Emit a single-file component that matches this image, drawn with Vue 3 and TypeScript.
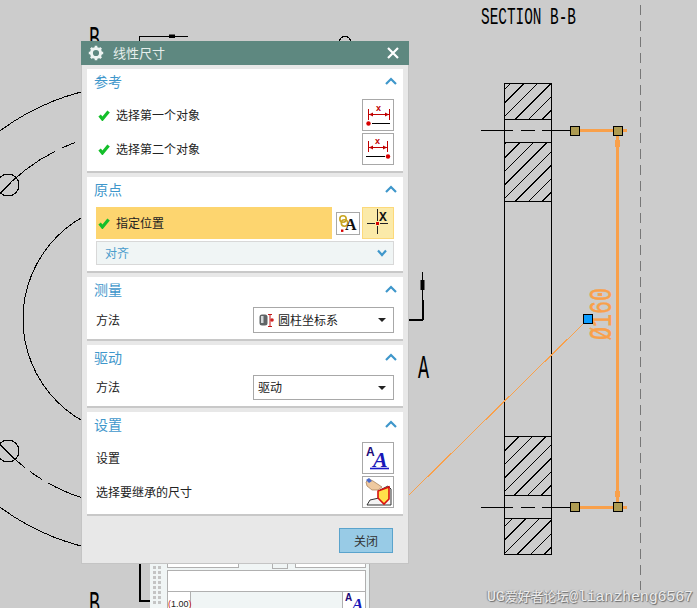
<script setup lang="ts">
interface Seg { x1: number; y1: number; x2: number; y2: number }

const hatchRects: [number, number, number, number, number][] = [
  [504, 84, 551, 119, 6],
  [504, 142, 551, 201, 3],
  [504, 436, 551, 495.5, 2],
  [504, 518, 551, 554, 9],
]

function hatch(x0: number, y0: number, x1: number, y1: number, off: number): Seg[] {
  const out: Seg[] = []
  const step = 13.5
  for (let c = x0 + y0 + off; c < x1 + y1; c += step) {
    const ax = Math.max(x0, c - y1)
    const bx = Math.min(x1, c - y0)
    if (bx > ax) out.push({ x1: ax, y1: c - ax, x2: bx, y2: c - bx })
  }
  return out
}

const hatchLines: Seg[] = hatchRects.flatMap((r) => hatch(r[0], r[1], r[2], r[3], r[4]))
const partRules: number[] = [83.5, 119.5, 142.5, 201.5, 436.5, 495.5, 518.5, 554.5]
const axisRows: number[] = [130.5, 507.5]
const handles: [number, number][] = [[570, 126], [613, 126], [570, 502], [613, 502]]
const gripDots: number[] = Array.from({ length: 16 }, (_, i) => i)
</script>

<template>
  <div class="page">
    <svg class="drawing" width="697" height="608" viewBox="0 0 697 608">
      <g class="crisp" fill="none" stroke="#000" stroke-width="1">
        <circle cx="140" cy="319" r="234.5" />
        <circle cx="140" cy="319" r="117" />
        <path d="M0 193.5 A188 188 0 0 1 55 151.3 M62 148 A188 188 0 0 1 75 142.6" />
        <path d="M0 444.5 A188 188 0 0 0 25 467.7 M30 471.5 A188 188 0 0 0 42 479.4 M48 483 A188 188 0 0 0 81 497.5" />
        <circle cx="8" cy="185" r="11" />
        <circle cx="8" cy="451" r="11" />
        <path d="M139.5 41 V36.5 H188" />
        <path d="M339 41 Q345 31 351 41" />
        <path d="M422.5 272 V319 H409" />
        <path d="M422.5 300 V320 M409 319.5 H423" stroke-width="2" />
        <path d="M140 564 V601 H150" stroke-width="2" />
        <path d="M504.5 84 V554 M551.5 84 V554" />
        <line v-for="y in partRules" :key="y" x1="504" x2="552" :y1="y" :y2="y" />
        <line v-for="(s, i) in hatchLines" :key="i" :x1="s.x1" :y1="s.y1" :x2="s.x2" :y2="s.y2" />
        <g v-for="y in axisRows" :key="y">
          <path :d="`M481 ${y} H513 M521 ${y} H535 M542 ${y} H571`" />
        </g>
      </g>
      <path d="M169 34.5 H175 V38 H169 Z M420.5 280 H424.5 V290 H420.5 Z" fill="#000" />
      <line class="crisp" x1="640.5" y1="5" x2="640.5" y2="590" stroke="#777" stroke-width="1" stroke-dasharray="10 6" />

      <text class="cad" x="481" y="24" textLength="95" lengthAdjust="spacingAndGlyphs">SECTION B-B</text>
      <text class="cad cad-big" x="89" y="49" textLength="11" lengthAdjust="spacingAndGlyphs">B</text>
      <text class="cad cad-big" x="89" y="614" textLength="11" lengthAdjust="spacingAndGlyphs">B</text>
      <text class="cad cad-big" x="418" y="378" textLength="11" lengthAdjust="spacingAndGlyphs">A</text>

      <g class="crisp" stroke="#f9a04a" fill="none">
        <path d="M580 130.5 H627 M580 507.5 H627" stroke-width="3" />
        <path d="M617.5 135 V502" stroke-width="3" />
        <path d="M617.5 140 V147 M617.5 491 V497" stroke-width="5" />
        <path d="M584 323 L409 495" stroke-width="1" />
      </g>
      <text class="dim" transform="translate(611 340) rotate(-90)" textLength="52" lengthAdjust="spacingAndGlyphs">Ø160</text>
      <rect v-for="(h, i) in handles" :key="i" :x="h[0] + 0.5" :y="h[1] + 0.5" width="9" height="9" fill="#ad9b52" stroke="#000" />
      <rect x="583.5" y="314.5" width="9" height="9" fill="#0a9cff" stroke="#000" />
    </svg>

    <div class="mark">UG<span class="mark-cjk">爱好者论坛</span>@lianzheng6567</div>

    <div class="under">
      <div class="grip">
        <i v-for="d in gripDots" :key="d"></i>
      </div>
      <div class="under-main">
        <div class="under-top">
          <span class="ut ut-a"></span>
          <span class="ut ut-b"></span>
          <span class="ut ut-c"></span>
        </div>
        <div class="under-box"></div>
        <div class="under-foot">
          <span class="scale"><b>(</b>1.00<b>)</b></span>
          <span class="mini-a">
            <svg width="22" height="16" viewBox="0 0 22 16">
              <text x="2" y="9" class="ia-tiny">A</text>
              <text x="9" y="18" class="ia-mid">A</text>
            </svg>
          </span>
        </div>
      </div>
    </div>

    <section class="dialog">
      <header class="title">
        <svg class="gear" width="16" height="16" viewBox="0 0 16 16">
          <circle cx="8" cy="8" r="4.6" fill="none" stroke="#eef4f2" stroke-width="3" />
          <path d="M8 0.8 V3 M8 13 V15.2 M0.8 8 H3 M13 8 H15.2 M2.9 2.9 L4.5 4.5 M11.5 11.5 L13.1 13.1 M13.1 2.9 L11.5 4.5 M4.5 11.5 L2.9 13.1" stroke="#eef4f2" stroke-width="2.6" />
        </svg>
        <span class="title-text">线性尺寸</span>
        <svg class="close-x" width="12" height="12" viewBox="0 0 12 12">
          <path d="M1 1 L11 11 M11 1 L1 11" stroke="#fff" stroke-width="2.2" />
        </svg>
      </header>

      <div class="body">
        <div class="group">
          <div class="head">
            <span>参考</span>
            <svg class="chev" width="12" height="8" viewBox="0 0 12 8"><path d="M1 7 L6 2 L11 7" /></svg>
          </div>
          <div class="row">
            <svg class="check" width="12" height="11" viewBox="0 0 12 11"><path d="M1.6 5.6 L4.4 9 L10.6 1.4" /></svg>
            <span class="label">选择第一个对象</span>
            <button class="icon-btn">
              <svg width="30" height="30" viewBox="0 0 30 30">
                <g stroke="#c00000" fill="none"><path d="M5.5 9 V20 M26.5 9 V20 M6 14.5 H26" /></g>
                <path d="M6 14.5 L10 12.5 V16.5 Z M26 14.5 L22 12.5 V16.5 Z" fill="#c00000" />
                <text x="13" y="11" class="ix">x</text>
                <path d="M9 23.5 H27" stroke="#000" />
                <circle cx="5.5" cy="23.5" r="2.2" fill="#d80000" />
              </svg>
            </button>
          </div>
          <div class="row">
            <svg class="check" width="12" height="11" viewBox="0 0 12 11"><path d="M1.6 5.6 L4.4 9 L10.6 1.4" /></svg>
            <span class="label">选择第二个对象</span>
            <button class="icon-btn">
              <svg width="30" height="30" viewBox="0 0 30 30">
                <g stroke="#c00000" fill="none"><path d="M5.5 7 V18 M24.5 7 V18 M6 13.5 H24" /></g>
                <path d="M6 13.5 L10 11.5 V15.5 Z M24 13.5 L20 11.5 V15.5 Z" fill="#c00000" />
                <text x="12" y="10" class="ix">x</text>
                <path d="M3 22.5 H22" stroke="#000" />
                <circle cx="25" cy="22.5" r="2.2" fill="#d80000" />
              </svg>
            </button>
          </div>
        </div>

        <div class="group">
          <div class="head">
            <span>原点</span>
            <svg class="chev" width="12" height="8" viewBox="0 0 12 8"><path d="M1 7 L6 2 L11 7" /></svg>
          </div>
          <div class="row">
            <div class="active-bar">
              <svg class="check" width="12" height="11" viewBox="0 0 12 11"><path d="M1.6 5.6 L4.4 9 L10.6 1.4" /></svg>
              <span class="label">指定位置</span>
            </div>
            <button class="icon-small">
              <svg width="22" height="21" viewBox="0 0 22 21">
                <circle cx="6" cy="6" r="3.2" fill="none" stroke="#c9a520" stroke-width="1.6" />
                <circle cx="7.5" cy="10" r="3.2" fill="none" stroke="#c9a520" stroke-width="1.6" />
                <text x="8" y="17" class="ia-black">A</text>
                <rect x="4" y="16.5" width="2.4" height="2.4" fill="#d80000" />
              </svg>
            </button>
            <button class="icon-btn is-on">
              <svg width="30" height="30" viewBox="0 0 30 30">
                <path d="M14.5 1 V13 M14.5 18 V26 M4 15.5 H12 M17 15.5 H25" stroke="#222" fill="none" />
                <rect x="13" y="14" width="3" height="3" fill="#d80000" />
                <text x="16" y="13" class="ix-big">X</text>
              </svg>
            </button>
          </div>
          <div class="align">
            <span>对齐</span>
            <svg class="chev" width="10" height="8" viewBox="0 0 10 8"><path d="M1 1.5 L5 6 L9 1.5" /></svg>
          </div>
        </div>

        <div class="group">
          <div class="head">
            <span>测量</span>
            <svg class="chev" width="12" height="8" viewBox="0 0 12 8"><path d="M1 7 L6 2 L11 7" /></svg>
          </div>
          <div class="row row-26">
            <span class="label plain">方法</span>
            <div class="select">
              <svg class="sel-icon" width="15" height="15" viewBox="0 0 15 15">
                <rect x="0.5" y="1.5" width="8" height="11" rx="2.5" fill="#5f6466" />
                <rect x="2" y="3" width="2.5" height="7" fill="#d4d8da" />
                <path d="M11 1 V14 M9 1.5 H13 M9 13.5 H13" stroke="#c01818" />
                <circle cx="13" cy="7" r="1.8" fill="#d02020" />
              </svg>
              <span>圆柱坐标系</span>
              <i class="tri"></i>
            </div>
          </div>
        </div>

        <div class="group">
          <div class="head">
            <span>驱动</span>
            <svg class="chev" width="12" height="8" viewBox="0 0 12 8"><path d="M1 7 L6 2 L11 7" /></svg>
          </div>
          <div class="row row-25">
            <span class="label plain">方法</span>
            <div class="select">
              <span>驱动</span>
              <i class="tri"></i>
            </div>
          </div>
        </div>

        <div class="group">
          <div class="head">
            <span>设置</span>
            <svg class="chev" width="12" height="8" viewBox="0 0 12 8"><path d="M1 7 L6 2 L11 7" /></svg>
          </div>
          <div class="row">
            <span class="label plain">设置</span>
            <button class="icon-btn">
              <svg width="30" height="30" viewBox="0 0 30 30">
                <text x="3" y="13" class="ia-small">A</text>
                <text x="10" y="24" class="ia-big">A</text>
                <path d="M7 25.5 H26" stroke="#1818c8" stroke-width="1.6" />
              </svg>
            </button>
          </div>
          <div class="row">
            <span class="label plain">选择要继承的尺寸</span>
            <button class="icon-btn">
              <svg width="30" height="30" viewBox="0 0 30 30">
                <path d="M7 23 L4 28 H28 V12 L25 9 L17 13 L16 21 Z" fill="#f4f4f4" stroke="#333" />
                <path d="M15 14 L26 10 V22 L21 27 L15 21 Z" fill="#ffe04a" stroke="#d81010" stroke-width="1.6" />
                <path d="M3 5 L6 2 L10 4 L19 10 L15 13 L9 13 L4 9 Z" fill="#eec9a0" stroke="#a07850" stroke-width="0.7" />
                <path d="M3 3 L6 1 L9 4 L6 6 Z" fill="#4868c8" />
              </svg>
            </button>
          </div>
        </div>

        <footer class="foot">
          <button class="close-btn">关闭</button>
        </footer>
      </div>
    </section>
  </div>
</template>

<style>
html, body { margin: 0; padding: 0; background: #cccccc; overflow: hidden; }
</style>

<style scoped>
.page {
  position: relative;
  width: 697px;
  height: 608px;
  overflow: hidden;
  background: #cccccc;
  font-family: "Noto Sans CJK SC", "Liberation Sans", sans-serif;
}
.drawing { position: absolute; left: 0; top: 0; }
.crisp { shape-rendering: crispEdges; }
.cad {
  font-family: "Liberation Mono", monospace;
  font-size: 24px;
  fill: #000;
}
.cad-big { font-size: 34px; }
.dim {
  font-family: "Liberation Mono", monospace;
  font-size: 32px;
  fill: #f9a04a;
  stroke: #f9a04a;
  stroke-width: 0.5px;
}
.mark {
  position: absolute;
  left: 487px;
  top: 587px;
  white-space: nowrap;
  letter-spacing: -0.15px;
  font: 400 15px/18px "Liberation Mono", "Noto Sans CJK SC", monospace;
  color: #ececec;
  text-shadow: 1px 1px 1px #6a6a6a, -1px 0 1px #8a8a8a;
}
.mark-cjk { font: 400 13px/18px "Noto Sans CJK SC", sans-serif; }

.under {
  position: absolute;
  left: 150px;
  top: 560px;
  width: 220px;
  height: 48px;
  display: flex;
  background: #f0f5f5;
  border-right: 1px solid #b0b0b0;
  box-sizing: border-box;
}
.grip {
  width: 13px;
  padding: 6px 0 0 3px;
  box-sizing: border-box;
  display: grid;
  grid-template-columns: 3px 3px;
  grid-auto-rows: 3px;
  gap: 2px;
}
.grip i { background: #c4c4c4; }
.under-main {
  flex: 1;
  display: flex;
  flex-direction: column;
  padding: 0 3px 0 4px;
}
.under-top { height: 10px; display: flex; align-items: stretch; }
.ut { display: block; box-sizing: border-box; border: 1px solid #b0b0b0; height: 8px; }
.ut-a { width: 72px; background: #fff; }
.ut-b { width: 16px; margin-left: 33px; height: 9px; }
.ut-c { width: 71px; margin-left: 7px; background: #fff; }
.under-box {
  height: 22px;
  box-sizing: border-box;
  background: #fff;
  border: 1px solid #b0b0b0;
}
.under-foot { flex: 1; display: flex; justify-content: space-between; overflow: hidden; }
.scale {
  width: 24px;
  box-sizing: border-box;
  background: #fff;
  border-right: 1px solid #b0b0b0;
  border-left: 1px solid #b0b0b0;
  font: 400 9px/24px "Liberation Sans", sans-serif;
  color: #222;
  text-align: center;
}
.scale b { color: #c81818; font-weight: 400; }
.mini-a {
  width: 24px;
  box-sizing: border-box;
  background: #fff;
  border-left: 1px solid #b0b0b0;
  border-right: 1px solid #b0b0b0;
  display: block;
}
.mini-a svg { display: block; }

.dialog {
  position: absolute;
  left: 81px;
  top: 41px;
  width: 328px;
  display: flex;
  flex-direction: column;
}
.title {
  height: 24px;
  background: #5e8880;
  display: flex;
  align-items: center;
  padding: 0 10px 0 7px;
  box-sizing: border-box;
}
.gear { flex: none; }
.title-text {
  margin-left: 9px;
  padding-bottom: 2px;
  font-size: 13px;
  color: #e6efec;
  flex: 1;
}
.close-x { flex: none; }
.body {
  background: #e8e8e8;
  border: 1px solid #c4c4c4;
  border-top: 0;
  padding: 4px 5px 0;
  display: flex;
  flex-direction: column;
  gap: 4px;
}
.group {
  background: #fff;
  padding: 0 9px 6px;
  border-bottom: 2px solid #c8c8c8;
  display: flex;
  flex-direction: column;
  gap: 2px;
}
.head {
  height: 26px;
  margin: 0 -3px 2px -2px;
  display: flex;
  align-items: center;
  justify-content: space-between;
  font-size: 14px;
  color: #3f97cb;
}
.head span { padding-bottom: 2px; }
.head .chev { margin-bottom: 3px; }
.chev { flex: none; }
.chev path { fill: none; stroke: #3f97cb; stroke-width: 2.2; }
.row {
  height: 32px;
  display: flex;
  align-items: center;
}
.row-26 { height: 26px; }
.row-25 { height: 25px; }
.check { flex: none; margin-left: 2px; }
.check path { fill: none; stroke: #14bf2a; stroke-width: 3.2; }
.label {
  flex: 1;
  margin-left: 6px;
  padding-bottom: 2px;
  font-size: 12px;
  color: #222;
}
.label.plain { margin-left: 0; }
.icon-btn {
  flex: none;
  width: 32px;
  height: 32px;
  padding: 0;
  box-sizing: border-box;
  background: #fff;
  border: 1px solid #a8a8a8;
  display: block;
}
.icon-btn svg, .icon-small svg { display: block; }
.icon-btn.is-on { background: #fbeaa9; border-color: #fcd97a; margin-left: 2px; }
.icon-small {
  flex: none;
  width: 24px;
  height: 23px;
  margin-left: 4px;
  padding: 0;
  box-sizing: border-box;
  background: #fff;
  border: 1px solid #a8a8a8;
}
.ix { font: 700 9px "Liberation Sans", sans-serif; fill: #c00000; }
.ix-big { font: 700 13px "Liberation Mono", monospace; fill: #111; }
.ia-black { font: 700 16px "Liberation Serif", serif; fill: #111; }
.ia-small { font: 700 12px "Liberation Sans", sans-serif; fill: #1c0a78; }
.ia-big { font: italic 700 22px "Liberation Serif", serif; fill: #1818b8; }
.ia-tiny { font: 700 10px "Liberation Sans", sans-serif; fill: #1c0a78; }
.ia-mid { font: italic 700 17px "Liberation Serif", serif; fill: #1818b8; }
.active-bar {
  width: 236px;
  height: 32px;
  flex: none;
  background: #fdd56f;
  display: flex;
  align-items: center;
}
.align {
  height: 24px;
  box-sizing: border-box;
  background: #f0f5f5;
  border: 1px solid #d8d8d8;
  display: flex;
  align-items: center;
  justify-content: space-between;
  padding: 0 6px 0 8px;
  font-size: 12px;
  color: #4a9ccc;
}
.align span { padding-bottom: 2px; }
.select {
  flex: none;
  width: 141px;
  height: 100%;
  box-sizing: border-box;
  background: #fff;
  border: 1px solid #a8a8a8;
  display: flex;
  align-items: center;
  padding: 0 7px 0 4px;
  gap: 4px;
  font-size: 12px;
  color: #222;
}
.select span { flex: 1; padding-bottom: 2px; }
.sel-icon { flex: none; margin-left: 1px; }
.tri {
  flex: none;
  width: 0;
  height: 0;
  border-left: 4px solid transparent;
  border-right: 4px solid transparent;
  border-top: 4px solid #222;
}
.foot {
  display: flex;
  justify-content: flex-end;
  padding: 8px 10px 10px 0;
}
.close-btn {
  width: 54px;
  height: 25px;
  padding: 0;
  box-sizing: border-box;
  background: #98cbe6;
  border: 1px solid #5aa3cc;
  color: #333;
  font: 12px "Noto Sans CJK SC", sans-serif;
}
</style>
